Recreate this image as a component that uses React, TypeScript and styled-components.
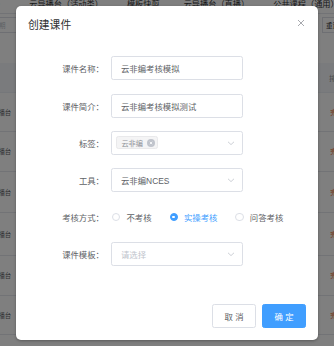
import React from 'react';
import styled, { createGlobalStyle } from 'styled-components';

const Global = createGlobalStyle`
  html, body { margin: 0; padding: 0; width: 334px; height: 346px; overflow: hidden; background: #fff; }
  body { font-family: "Liberation Sans", "Noto Sans CJK SC", sans-serif; }
  * { box-sizing: border-box; }
`;

/* ---------- background page ---------- */
const Page = styled.div`
  position: relative;
  width: 334px;
  height: 346px;
  overflow: hidden;
  background: #fff;
  color: #606266;
  display: flex;
  flex-direction: column;
`;

const TabsBar = styled.div`
  margin-top: -8px;
  height: 22px;
  display: flex;
  align-items: center;
  gap: 24px;
  border-bottom: 1px solid #e4e7ed;
  font-size: 8.2px;
  color: #303133;
  white-space: nowrap;
`;

const Tab = styled.span<{ $offset?: number }>`
  margin-left: ${(p) => p.$offset ?? 0}px;
`;

const FilterRow = styled.div`
  height: 49px;
  display: flex;
  justify-content: space-between;
  align-items: flex-start;
  padding-top: 3px;
  font-size: 6.5px;
  white-space: nowrap;
`;

const DateBox = styled.div`
  margin-left: -14px;
  width: 31px;
  height: 16px;
  border: 1px solid #dcdfe6;
  border-left: none;
  display: flex;
  align-items: center;
  color: #c0c4cc;
`;

const ResetBtn = styled.div`
  margin-right: -14px;
  width: 26px;
  height: 16px;
  border: 1px solid #dcdfe6;
  display: flex;
  align-items: center;
  padding-left: 3px;
  color: #303133;
`;

const TableHead = styled.div`
  height: 30px;
  background: #f5f7fa;
  display: flex;
  justify-content: space-between;
  align-items: center;
  border-bottom: 1px solid #ebeef5;
  font-size: 7px;
  color: #909399;
  white-space: nowrap;
`;

const TableRow = styled.div<{ $h: number }>`
  height: ${(p) => p.$h}px;
  display: flex;
  justify-content: space-between;
  align-items: center;
  border-bottom: 1px solid #e4e7ed;
  font-size: 6.4px;
  white-space: nowrap;
`;

const CellLeft = styled.span`
  margin-left: -8px;
  color: #606266;
`;

const CellRight = styled.span<{ $status?: boolean }>`
  margin-right: -9px;
  color: ${(p) => (p.$status ? '#e8621a' : '#909399')};
`;

const Overlay = styled.div`
  position: absolute;
  inset: 0;
  background: rgba(0, 0, 0, 0.5);
`;

/* ---------- dialog ---------- */
const Dialog = styled.div`
  position: absolute;
  left: 16px;
  top: 6px;
  width: 302px;
  background: #fff;
  border-radius: 5px;
  box-shadow: 0 1px 3px rgba(0, 0, 0, 0.3);
  display: flex;
  flex-direction: column;
  font-family: "Liberation Sans", "Noto Sans CJK SC", sans-serif;
`;

const Header = styled.div`
  position: relative;
  padding: 12px 12px 6px;
`;

const Title = styled.div`
  font-size: 10.8px;
  line-height: 14.4px;
  color: #303133;
`;

const CloseBtn = styled.button`
  position: absolute;
  top: 12px;
  right: 12px;
  width: 10px;
  height: 10px;
  padding: 0;
  border: none;
  background: transparent;
  display: flex;
`;

const Body = styled.div`
  padding: 18px 12px;
`;

const FormItem = styled.div`
  display: flex;
  align-items: center;
  height: 24px;
  margin-bottom: 13.2px;
`;

const Label = styled.label`
  width: 83px;
  padding-right: 7px;
  text-align: right;
  font-size: 8.4px;
  color: #606266;
  white-space: nowrap;
`;

const Field = styled.div<{ $tight?: boolean }>`
  width: 132px;
  height: 24px;
  border: 1px solid #dcdfe6;
  border-radius: 2.4px;
  padding: 0 ${(p) => (p.$tight ? '3.6px' : '9px')};
  display: flex;
  align-items: center;
  justify-content: space-between;
  font-size: 8.4px;
  color: #606266;
  white-space: nowrap;
`;

const Placeholder = styled.span`
  color: #c0c4cc;
`;

const Chevron = styled.svg`
  width: 8px;
  height: 8px;
  margin-right: -2px;
  flex: none;
`;

const ChevronSlot = styled.span`
  display: flex;
  margin-right: 5.4px;
`;

const Tag = styled.span`
  height: 13.4px;
  padding: 0 2px 0 4.8px;
  background: #f4f4f5;
  border: 1px solid #e9e9eb;
  border-radius: 2.4px;
  display: flex;
  align-items: center;
  gap: 4.5px;
  font-size: 7.2px;
  color: #909399;
`;

const TagClose = styled.span`
  width: 8px;
  height: 8px;
  border-radius: 50%;
  background: #c0c4cc;
  display: flex;
  align-items: center;
  justify-content: center;
`;

const RadioGroup = styled.div`
  display: flex;
  align-items: center;
  gap: 18px;
  padding-left: 1px;
`;

const RadioItem = styled.label<{ $checked?: boolean }>`
  display: flex;
  align-items: center;
  gap: 6px;
  font-size: 8.4px;
  color: ${(p) => (p.$checked ? '#409eff' : '#606266')};
  white-space: nowrap;
`;

const RadioCircle = styled.span<{ $checked?: boolean }>`
  width: 8.4px;
  height: 8.4px;
  border-radius: 50%;
  border: 1px solid ${(p) => (p.$checked ? '#409eff' : '#dcdfe6')};
  background: ${(p) => (p.$checked ? '#409eff' : '#fff')};
  display: flex;
  align-items: center;
  justify-content: center;
  &::after {
    content: '';
    width: 2.6px;
    height: 2.6px;
    border-radius: 50%;
    background: #fff;
    display: ${(p) => (p.$checked ? 'block' : 'none')};
  }
`;

const Footer = styled.div`
  padding: 6px 12px 12px;
  display: flex;
  justify-content: flex-end;
  gap: 6px;
`;

const Button = styled.button<{ $primary?: boolean }>`
  width: 44px;
  height: 24px;
  padding: 0;
  border-radius: 2.4px;
  border: 1px solid ${(p) => (p.$primary ? '#409eff' : '#dcdfe6')};
  background: ${(p) => (p.$primary ? '#409eff' : '#fff')};
  color: ${(p) => (p.$primary ? '#fff' : '#606266')};
  font-family: "Liberation Sans", "Noto Sans CJK SC", sans-serif;
  font-size: 8.4px;
  white-space: pre;
`;

const ChevronIcon = () => (
  <Chevron viewBox="0 0 8 8">
    <path d="M1 2.8 L4 5.6 L7 2.8" fill="none" stroke="#c0c4cc" strokeWidth="0.8" />
  </Chevron>
);

const rowHeights = [39, 40, 41, 43, 40, 39];

export default function App() {
  return (
    <>
      <Global />
      <Page>
        <TabsBar>
          <Tab $offset={-3}>）</Tab>
          <Tab>云导播台（活动类）</Tab>
          <Tab>模板快剪</Tab>
          <Tab>云导播台（直播）</Tab>
          <Tab>公共课程（通用）</Tab>
        </TabsBar>
        <FilterRow>
          <DateBox>束日期</DateBox>
          <ResetBtn>重置</ResetBtn>
        </FilterRow>
        <TableHead>
          <CellLeft>称</CellLeft>
          <CellRight>排序</CellRight>
        </TableHead>
        {rowHeights.map((h, i) => (
          <TableRow key={i} $h={h}>
            <CellLeft>导播台</CellLeft>
            <CellRight $status>完成</CellRight>
          </TableRow>
        ))}
        <Overlay />
        <Dialog>
          <Header>
            <Title>创建课件</Title>
            <CloseBtn aria-label="关闭">
              <svg width="10" height="10" viewBox="0 0 10 10">
                <path d="M2 2 L8 8 M8 2 L2 8" stroke="#909399" strokeWidth="0.8" fill="none" />
              </svg>
            </CloseBtn>
          </Header>
          <Body>
            <FormItem>
              <Label>课件名称：</Label>
              <Field>云非编考核模拟</Field>
            </FormItem>
            <FormItem>
              <Label>课件简介：</Label>
              <Field>云非编考核模拟测试</Field>
            </FormItem>
            <FormItem>
              <Label>标签：</Label>
              <Field $tight>
                <Tag>
                  云非编
                  <TagClose>
                    <svg width="6" height="6" viewBox="0 0 6 6">
                      <path d="M1.8 1.8 L4.2 4.2 M4.2 1.8 L1.8 4.2" stroke="#fff" strokeWidth="0.8" />
                    </svg>
                  </TagClose>
                </Tag>
                <ChevronSlot>
                  <ChevronIcon />
                </ChevronSlot>
              </Field>
            </FormItem>
            <FormItem>
              <Label>工具：</Label>
              <Field>
                云非编NCES
                <ChevronIcon />
              </Field>
            </FormItem>
            <FormItem>
              <Label>考核方式：</Label>
              <RadioGroup>
                <RadioItem>
                  <RadioCircle />
                  不考核
                </RadioItem>
                <RadioItem $checked>
                  <RadioCircle $checked />
                  实操考核
                </RadioItem>
                <RadioItem>
                  <RadioCircle />
                  问答考核
                </RadioItem>
              </RadioGroup>
            </FormItem>
            <FormItem>
              <Label>课件模板：</Label>
              <Field>
                <Placeholder>请选择</Placeholder>
                <ChevronIcon />
              </Field>
            </FormItem>
          </Body>
          <Footer>
            <Button>取 消</Button>
            <Button $primary>确 定</Button>
          </Footer>
        </Dialog>
      </Page>
    </>
  );
}
